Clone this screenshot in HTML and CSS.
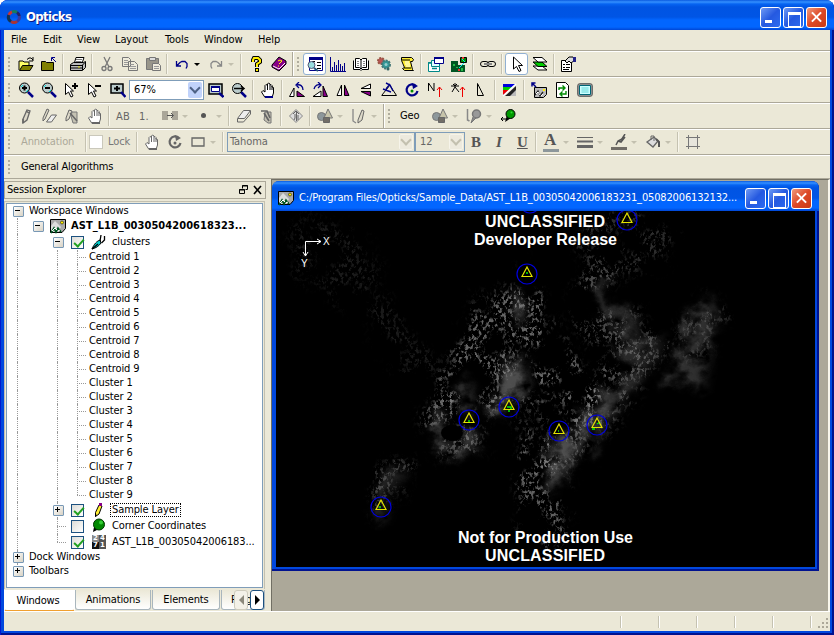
FILE: index.html
```html
<!DOCTYPE html>
<html lang="en">
<head>
<meta charset="utf-8">
<title>Opticks</title>
<link rel="stylesheet" href="styles.css">
</head>
<body>
<svg class="defs" width="0" height="0" aria-hidden="true">
<symbol id="open" viewBox="0 0 16 16"><path d="M1 14V5h4l1 1h5v3" fill="#ff6" stroke="#000"/><path d="M1.500 14.500L4.500 9.500H15L12 14.500z" fill="#808000" stroke="#000"/><path d="M9 3.500l2-1.500h2l2 2M15 1v4h-4" fill="none" stroke="#000"/></symbol>
<symbol id="closef" viewBox="0 0 16 16"><path d="M.500 14.500v-9h4l1 1h7v8z" fill="#808000" stroke="#000"/><path d="M15 6L11 2M10.500 5V1.500H14" fill="none" stroke="#008"/></symbol>
<symbol id="print" viewBox="0 0 16 16"><path d="M4.500 6.500L6 1.500h8l-2 6" fill="#fff" stroke="#000"/><path d="M6 3.500h6M5.500 5.500h6" stroke="#777"/><path d="M.500 8.500l3-2h10l2-1v6l-3 3h-12z" fill="#bbb" stroke="#000"/><path d="M1 9.500h11l3-3M12.500 9v5M1 12h11" stroke="#000" fill="none"/><path d="M8 11h2" stroke="#dd0"/></symbol>
<symbol id="cut" viewBox="0 0 16 16"><path d="M5 1l5 10M11 1L6 11" stroke="#777" stroke-width="1.300" fill="none"/><circle cx="5" cy="12.500" r="2" fill="none" stroke="#777" stroke-width="1.300"/><circle cx="11" cy="12.500" r="2" fill="none" stroke="#777" stroke-width="1.300"/></symbol>
<symbol id="copy" viewBox="0 0 16 16"><path d="M.500 1.500h6l2 2v7h-8zM6.500 5.500h6l3 3v6h-9z" fill="#eeebdc" stroke="#777"/><path d="M2 4.500h4M2 6.500h4M2 8.500h4M8 8.500h4M8 10.500h6M8 12.500h6" stroke="#999"/></symbol>
<symbol id="paste" viewBox="0 0 16 16"><path d="M1.500 2.500h12v11h-12z" fill="#98958a" stroke="#777"/><path d="M4.500 1.500h6v3h-6z" fill="#ddd" stroke="#777"/><path d="M7.500 7.500h6l2 2v5h-8z" fill="#eeebdc" stroke="#777"/><path d="M9 10.500h5M9 12.500h5" stroke="#999"/></symbol>
<symbol id="undo" viewBox="0 0 16 16"><path d="M2.500 5v5H7M3 9.500L6 6.500l2-1h3l2 2v3l-1 2" fill="none" stroke="currentColor" stroke-width="1.300"/></symbol>
<symbol id="redo" viewBox="0 0 16 16"><path d="M13.500 5v5H9M13 9.500L10 6.500l-2-1H5l-2 2v3l1 2" fill="none" stroke="currentColor" stroke-width="1.300"/></symbol>
<symbol id="help" viewBox="0 0 16 16"><path d="M5 6V4l1-2h4l2 2v2L9 8v3" fill="none" stroke="#000" stroke-width="4"/><path d="M7 12h4v4H7z"/><path d="M5 6V4l1-2h4l2 2v2L9 8v3M8 14h2" fill="none" stroke="#fe0" stroke-width="2"/></symbol>
<symbol id="book" viewBox="0 0 16 16"><path d="M1 9L8 1l7 4v3l-7 7-7-4z" fill="#808" stroke="#000"/><path d="M2 10l6 3 6-6" stroke="#fff" fill="none"/><path d="M7 5l2-1 2 1-2 2-1 1M7 10h1" stroke="#ff0" fill="none"/></symbol>
<symbol id="session" viewBox="0 0 16 16"><path d="M2.500 1.500h13v13h-13z" fill="#fff" stroke="#008"/><path d="M2 1h14v3H2z" fill="#008"/><path d="M10 6.500h4M10 9.500h4M10 12.500h4M5 5.500h3" stroke="#000"/><circle cx="4.500" cy="9" r="3.500" fill="#9dd" stroke="#557"/><path d="M7 12l4 3" stroke="#257" stroke-width="2"/></symbol>
<symbol id="hist" viewBox="0 0 16 16"><path d="M.500 1v14.500H16" stroke="#008" fill="none"/><path d="M2.500 15v-4M4.500 15V6M6.500 15V9M8.500 15V4M10.500 15V8M12.500 15v-5M14.500 15V7" stroke="#008"/></symbol>
<symbol id="pages" viewBox="0 0 16 16"><path d="M.500 4.500V13.500H7l1 1 1-1h6.500v-9" fill="#fff" stroke="#000"/><path d="M2.500 2.500h4l1.500 1.500 1.500-1.500h4v9h-4L8 13l-1.500-1.500h-4z" fill="#fff" stroke="#000"/><path d="M8 4v9" stroke="#000"/><path d="M4 5.500h2M4 7.500h2M4 9.500h2M10 5.500h2M10 7.500h2M10 9.500h2" stroke="#888"/></symbol>
<symbol id="gears" viewBox="0 0 16 16"><circle cx="5" cy="5" r="3" fill="#b55" stroke="#954" stroke-width="2" stroke-dasharray="2 1"/><circle cx="10" cy="8.500" r="4" fill="#399" stroke="#477" stroke-width="2" stroke-dasharray="2 1"/><circle cx="10" cy="8.500" r="1.500" fill="#9cc"/><circle cx="12" cy="13" r="1.500" fill="#366"/></symbol>
<symbol id="scroll" viewBox="0 0 16 16"><path d="M2.500 1.500h10l2 2-1 2h-2l2 8 1 1h-9l-2-2 2-1-3-7z" fill="#fe3" stroke="#000"/><path d="M6 6h4M6 8h5M7 10h4" stroke="#fff"/><path d="M3 4h8M5 12h7" stroke="#000"/></symbol>
<symbol id="wins" viewBox="0 0 16 16"><path d="M.500 6.500h11v9H.500z" fill="#fff" stroke="#088"/><path d="M0 7h11M4 12.500h5" stroke="#088" stroke-width="1.500"/><path d="M3.500 4.500h8v6h-8z" fill="#dff" stroke="#088"/><path d="M6.500 1.500h9v6h-9z" fill="#fff" stroke="#008"/><path d="M6 2h10" stroke="#008" stroke-width="2"/></symbol>
<symbol id="green" viewBox="0 0 16 16"><path d="M0 5h7v4h7v7H0z" fill="#052"/><path d="M9.500 1.500h6v5h-6z" fill="#080" stroke="#000"/><path d="M13 7l-5 5M11 3l3 3" stroke="#0ee"/><path d="M2 8h2v2H2zM10 12h2v3h-2zM5 11h2v1H5z" fill="#2b4"/><path d="M11 1h2v2h-2zM7 13h2v2H7z" fill="#e33"/></symbol>
<symbol id="link" viewBox="0 0 16 16"><g fill="none" stroke="#000"><rect x=".500" y="5.500" width="8" height="5" rx="2.500"/><rect x="7.500" y="5.500" width="8" height="5" rx="2.500"/></g><path d="M4 8h8" stroke="#444" stroke-width="2"/><path d="M4 8h8" stroke="#fff" stroke-width=".7"/></symbol>
<symbol id="cursor" viewBox="0 0 16 16"><path d="M4.500 1v12l3-2.500 2.500 5 2-1-2.500-5h4z" fill="#fff" stroke="#000"/></symbol>
<symbol id="layers" viewBox="0 0 16 16"><path d="M1 10h9l5 4H6z" fill="#fff" stroke="#000"/><path d="M1 6h9l5 4.500H6z" fill="#0c0" stroke="#000"/><path d="M1 1.500h9l5 4.500H6z" fill="#fff" stroke="#000"/></symbol>
<symbol id="props" viewBox="0 0 16 16"><path d="M.500 4.500h10v11H.500z" fill="#fff" stroke="#000"/><path d="M2 8.500h2M5 8.500h4M2 11.500h2M5 11.500h4M2 13.500h6" stroke="#000"/><path d="M4 5l4-4h4l2 3-4 3-2-2-2 2z" fill="#ddd" stroke="#000"/><path d="M12 1h3v5h-3z" fill="#228"/></symbol>
<symbol id="zin" viewBox="0 0 16 16"><path d="M10 10l5 5" stroke="#008" stroke-width="2.500"/><circle cx="6.500" cy="6" r="5" fill="#bcc" stroke="#000"/><path d="M4 6h5M6.500 3.500v5" stroke="#000" stroke-width="2"/><path d="M3 5l2-2M8 10l2-2" stroke="#0dd"/></symbol>
<symbol id="zout" viewBox="0 0 16 16"><path d="M10 10l5 5" stroke="#008" stroke-width="2.500"/><circle cx="6.500" cy="6" r="5" fill="#bcc" stroke="#000"/><path d="M4 6h5" stroke="#000" stroke-width="2"/><path d="M3 5l2-2M8 10l2-2" stroke="#0dd"/></symbol>
<symbol id="cplus" viewBox="0 0 16 16"><path d="M1.500 1.500v11l3-2.500 2.500 5 2-1-2.500-5h3z" fill="#fff" stroke="#000"/><path d="M8 4h6M11 1v6" stroke="#000" stroke-width="2"/></symbol>
<symbol id="cminus" viewBox="0 0 16 16"><path d="M1.500 1.500v11l3-2.500 2.500 5 2-1-2.500-5h3z" fill="#fff" stroke="#000"/><path d="M8 4h6" stroke="#000" stroke-width="2"/></symbol>
<symbol id="zrect" viewBox="0 0 16 16"><path d="M1 2h12v9H1z" fill="#bcc" stroke="#000" stroke-width="1.500"/><path d="M4 6.500h6M7 4v5" stroke="#000" stroke-width="2"/><path d="M11 10l4.500 5" stroke="#008" stroke-width="2.500"/></symbol>
<symbol id="zwin" viewBox="0 0 16 16"><path d="M1 2h13v10H1z" fill="#bcc" stroke="#000" stroke-width="1.500"/><path d="M3.500 4.500h8v5h-8z" fill="#fff" stroke="#008"/><path d="M3 5h9" stroke="#008" stroke-width="2"/><path d="M11 11l4.500 4" stroke="#008" stroke-width="2.500"/></symbol>
<symbol id="zfwd" viewBox="0 0 16 16"><path d="M10 10l5 5" stroke="#008" stroke-width="2.500"/><circle cx="6.500" cy="6.500" r="5" fill="#bcc" stroke="#000"/><path d="M3 6.500h9M10 4l3 2.500L10 9" stroke="#000" stroke-width="1.500" fill="none"/></symbol>
<symbol id="hand" viewBox="0 0 16 16"><path d="M5 15.500L1.500 10 3 8.500 5 10V3.500l1-1 1.500 1V2l1-1 1.500 1v1l1-.500 1 1V5l1.500.500V11L12 15.500z" fill="#fff" stroke="currentColor"/><path d="M7.500 3v5M10 3v5M12 4v4" stroke="currentColor"/><path d="M5 15h8" stroke="var(--cuff)" stroke-width="2"/></symbol>
<symbol id="rotl" viewBox="0 0 16 16"><path d="M.500 14.500L5 6v8.500z" fill="#fff" stroke="#000"/><path d="M8 14.500V9l7.500 5.500z" fill="#808" stroke="#000"/><path d="M14 8c0-4-3-6-6-5M10 0L7 3l3 3" stroke="#008" fill="none" stroke-width="1.300"/></symbol>
<symbol id="rotr" viewBox="0 0 16 16"><path d="M15.500 14.500L11 4v10.500z" fill="#808" stroke="#000"/><path d="M9 14.500V9L1 14.500z" fill="#fff" stroke="#000"/><path d="M2 7c1-4 4-5 7-4M6 0l3 3-3 3" stroke="#008" fill="none" stroke-width="1.300"/></symbol>
<symbol id="fliph" viewBox="0 0 16 16"><path d="M6.500 3v10.500H2z" fill="#fff" stroke="#000"/><path d="M9.500 3v10.500H14z" fill="#808" stroke="#000"/></symbol>
<symbol id="flipv" viewBox="0 0 16 16"><path d="M12.500 6.500H3l9.500-4.500z" fill="#fff" stroke="#000"/><path d="M12.500 9.500H3l9.500 4.500z" fill="#808" stroke="#000"/></symbol>
<symbol id="rotfree" viewBox="0 0 16 16"><path d="M.500 13.500h15L8 2M1 13L9 3" stroke="#000" fill="none"/><path d="M5 1l4 2 3 6M2 7l8 3M9 2l-4 5" stroke="#008" stroke-width="1.400" fill="none"/></symbol>
<symbol id="rotate" viewBox="0 0 16 16"><path d="M12 4A5.500 5.500 0 1 0 13.500 9" fill="none" stroke="currentColor" stroke-width="2.200"/><path d="M8 1l6 3-5 3z" fill="currentColor"/><circle cx="8" cy="9" r="1.500" fill="var(--hub)"/></symbol>
<symbol id="north" viewBox="0 0 16 16"><path d="M1.500 9V1L7 9V1" stroke="#000" fill="none"/><path d="M12.500 15V5M10 8l2.500-3L15 8" stroke="#e00" fill="none"/></symbol>
<symbol id="north2" viewBox="0 0 16 16"><path d="M1 4h8M5 1v4L2 10M5 5l4 5M3 2l2 2 2-2" stroke="#000" fill="none"/><path d="M12.500 15V5M10 8l2.500-3L15 8" stroke="#e00" fill="none"/></symbol>
<symbol id="tri" viewBox="0 0 16 16"><path d="M4.500 1.500v12h6z" stroke="#000" fill="none"/></symbol>
<symbol id="diag" viewBox="0 0 16 16"><path d="M1 2h13L1 13z" fill="#00d"/><path d="M1 5h10L6 9H1z" fill="#0c0"/><path d="M1 8h6l-6 5z" fill="#e00"/><path d="M14 4v10H3z" fill="#222"/><path d="M14 8v6H8z" fill="#bbb"/><path d="M14 2L1 14" stroke="#fff" stroke-width="1.500"/></symbol>
<symbol id="scene" viewBox="0 0 16 16"><path d="M.500 1.500h15v9L12 14.500H.500z" fill="#aaa" stroke="#000"/><path d="M1 8l4-5 4 4 2 2-3 5H1z" fill="#ddd"/><path d="M1 15l3-5 2 4 2-4 3 4" stroke="#052" stroke-width="1.700" fill="none"/><path d="M2 13l3-3 2 2M8 13l2-1" stroke="#fff" fill="none"/><circle cx="12" cy="4.500" r="1.500" fill="#fe0" stroke="#000" stroke-width=".5"/></symbol>
<symbol id="addscene" viewBox="0 0 16 16"><path d="M3.500 5.500h12v7l-3 3h-9z" fill="#bbb" stroke="#000"/><path d="M4 13l3-4 2 5 3-4" stroke="#222" stroke-width="1.300" fill="none"/><path d="M5 12l2-2 2 3M10 14l2-2" stroke="#fff" fill="none"/><path d="M1 1l4 4M1 4.500V1h3.500" stroke="#008" stroke-width="1.500" fill="none"/><path d="M12 7h2v2h-2z" fill="#fe0"/></symbol>
<symbol id="refresh" viewBox="0 0 16 16"><path d="M2.500.500h9l3 3v12h-12z" fill="#fff" stroke="#000"/><path d="M5 8V6h5M8.500 3.500L11 6 8.500 8.500M12 9v3H7M8.500 9.500L6 12l2.500 2.500" stroke="#080" stroke-width="1.400" fill="none"/></symbol>
<symbol id="screen" viewBox="0 0 16 16"><rect x=".7" y="1.700" width="14.600" height="12.600" rx="2" fill="#999" stroke="#555"/><path d="M2.500 3.500h11v9h-11z" fill="#cff" stroke="#067"/><path d="M4 6h8M4 8h8M4 10h8M6 5v6M8 5v6M10 5v6" stroke="#5cc" stroke-width=".5"/></symbol>
<symbol id="pencil" viewBox="0 0 16 16"><path d="M5 11L9 2l3 1-3 9-4 3z" fill="#ddd9c9" stroke="#666" stroke-width="1.300"/><path d="M8 3l3 2M5 11v4" stroke="#666" stroke-width="1.500"/></symbol>
<symbol id="penerase" viewBox="0 0 16 16"><path d="M2 10L6 1l2 1-4 9-2 2z" fill="#ddd9c9" stroke="#666"/><path d="M5.500 14l5-7h5l-5 7z" fill="#eee" stroke="#666"/></symbol>
<symbol id="pencopy" viewBox="0 0 16 16"><path d="M2 10L5 2l3 1-3 8-3 2z" fill="#ddd9c9" stroke="#666"/><path d="M8 4h5v11h-4L7 8z" fill="#c5c2b3" stroke="#777"/><path d="M6 5l7 8" stroke="#666" stroke-width="1.500"/></symbol>
<symbol id="numbers" viewBox="0 0 16 16"><path d="M0 3h6v9H0zM10 3h6v9h-6z" fill="#aaa699"/><path d="M5 7.500h6M9 5l2.500 2.500L9 10" stroke="#555" fill="none"/></symbol>
<symbol id="dot" viewBox="0 0 16 16"><circle cx="7.500" cy="7.500" r="2.500" fill="#555"/></symbol>
<symbol id="eraser" viewBox="0 0 16 16"><path d="M1.500 10.500l6-8h7l-6 8z" fill="#eee" stroke="#666"/><path d="M1.500 11v3h6l7-8V3" fill="none" stroke="#666"/></symbol>
<symbol id="penbook" viewBox="0 0 16 16"><path d="M6 4h6v11H9L5 12z" fill="#c5c2b3" stroke="#777"/><path d="M2 3h6l3 7M5 5l5 8" stroke="#666" stroke-width="1.700" fill="none"/></symbol>
<symbol id="road" viewBox="0 0 16 16"><path d="M8 1.500L14.500 8 8 14.500 1.500 8z" fill="#ddd" stroke="#888"/><path d="M6 12l1-2V6M8.500 4v9M10 12V7M5 6l3-3 3 3" stroke="#666" fill="none"/></symbol>
<symbol id="shapes" viewBox="0 0 16 16"><circle cx="4.500" cy="8.500" r="4" fill="#8d979b" stroke="#777"/><path d="M11 1l4.500 9H7z" fill="#c7c4aa" stroke="#777"/><path d="M6.500 9.500h6v5h-6z" fill="#716d67" stroke="#666"/></symbol>
<symbol id="pens" viewBox="0 0 16 16"><path d="M2 1v12l3 2M2 1v9" stroke="#888" stroke-width="1.300" fill="none"/><path d="M7 12l4-10 2 1-2 9-4 3z" fill="#ddd9c9" stroke="#666"/></symbol>
<symbol id="pin" viewBox="0 0 16 16"><path d="M1.500 1v11l2 1" stroke="#888" stroke-width="1.500" fill="none"/><circle cx="10.500" cy="6" r="4" fill="#999" stroke="#777" stroke-width="1.500"/><path d="M7 9l-2 6 5-5" fill="#888" stroke="#777"/></symbol>
<symbol id="gpin" viewBox="0 0 16 16"><path d="M7 7l-2 7 6-4z"/><circle cx="10.500" cy="6" r="4.500" fill="#090" stroke="#000"/><path d="M1 11h6M3 9l-2 2 2 2" stroke="#000" fill="none"/><circle cx="11.500" cy="4.500" r="1" fill="#3d3"/></symbol>
<symbol id="balloon" viewBox="0 0 16 16"><path d="M3 9l-1 5 6-3z"/><circle cx="8" cy="6.500" r="5.500" fill="#080" stroke="#030"/><circle cx="10" cy="4.500" r="2" fill="#3c3"/></symbol>
<symbol id="rect" viewBox="0 0 16 16"><path d="M2 4h12v8H2z" fill="none" stroke="#666" stroke-width="1.300"/></symbol>
<symbol id="lines" viewBox="0 0 16 16"><path d="M0 3.500h16" stroke="#666"/><path d="M0 7.500h16" stroke="#666" stroke-width="2"/><path d="M0 12.500h16" stroke="#666" stroke-width="3"/></symbol>
<symbol id="pen" viewBox="0 0 16 16"><path d="M0 13h16v3H0z" fill="#716d67"/><path d="M5 11l2-4 4-2 3-5M7 7l3 1 4-5" fill="#999" stroke="#555" stroke-width="1.500"/></symbol>
<symbol id="fill" viewBox="0 0 16 16"><path d="M2 8l7-5 4 4-5 6z" fill="#ddd" stroke="#666" stroke-width="1.300"/><path d="M6 6V2h3v5" fill="none" stroke="#666"/><path d="M11 5l3 3v5" stroke="#555" stroke-width="2" fill="none"/></symbol>
<symbol id="crop" viewBox="0 0 16 16"><path d="M4 4h8v8H4z" fill="#e7e5dc"/><path d="M3.500 1v14M12.500 1v14M1 3.500h14M1 12.500h14" stroke="#777" fill="none"/></symbol>
<symbol id="brush" viewBox="0 0 16 16"><path d="M1 15c2-5 5-8 8-9l1 3c-2 3-5 5-9 6z" fill="#0cc" stroke="#000"/><path d="M9 7l1-6M10.500 9l3-3V2M1 15l6-5" stroke="#000" fill="none" stroke-width="1.300"/></symbol>
<symbol id="ypencil" viewBox="0 0 16 16"><path d="M4.500 14.500v-4L8 3l3 1-3 8z" fill="#fe3" stroke="#000"/><path d="M8 1h3v3H8z" fill="#808"/><path d="M4 12v3l2-2z"/></symbol>
<symbol id="marker" viewBox="-12 -12 24 24"><circle r="10" fill="none" stroke="#00d" stroke-width="1.200"/><path d="M0-7L5 2.500H-5z" fill="none" stroke="#e2e200" stroke-width="1.200"/></symbol>
</svg>
<div class="frame">
  <header class="titlebar">
    <svg class="logo" viewBox="0 0 16 16"><g fill="none" stroke-width="3"><path d="M2.800 6A5.500 5.500 0 0 1 6 2.800" stroke="#c33"/><path d="M6 2.800A5.500 5.500 0 0 1 11 3.500" stroke="#187b5c"/><path d="M11 3.500A5.500 5.500 0 0 1 13.400 7" stroke="#226"/><path d="M13.400 7A5.500 5.500 0 0 1 11 12.500" stroke="#3c3a9c"/><path d="M11 12.500A5.500 5.500 0 0 1 5 12.600" stroke="#a33"/><path d="M5 12.600A5.500 5.500 0 0 1 2.800 6" stroke="#135"/></g></svg>
    <h1>Opticks</h1>
    <div class="caps"><b class="cap min"></b><b class="cap max"></b><b class="cap close"></b></div>
  </header>
  <div class="body">
    <nav class="menu"><span>File</span><span>Edit</span><span>View</span><span>Layout</span><span>Tools</span><span>Window</span><span>Help</span></nav>
    <div class="bar">
      <i class="grip"></i>
      <i class="b"><svg><use href="#open"/></svg></i><i class="b"><svg><use href="#closef"/></svg></i><i class="sep"></i>
      <i class="b"><svg><use href="#print"/></svg></i><i class="sep"></i>
      <i class="b"><svg><use href="#cut"/></svg></i><i class="b"><svg><use href="#copy"/></svg></i><i class="b"><svg><use href="#paste"/></svg></i><i class="sep"></i>
      <i class="b drop navy"><svg><use href="#undo"/></svg></i><i class="b drop off"><svg><use href="#redo"/></svg></i><i class="sep"></i>
      <i class="b"><svg><use href="#help"/></svg></i><i class="b"><svg><use href="#book"/></svg></i><i class="edge"></i>
      <i class="grip"></i>
      <i class="b on"><svg><use href="#session"/></svg></i><i class="b"><svg><use href="#hist"/></svg></i><i class="b"><svg><use href="#pages"/></svg></i><i class="b"><svg><use href="#gears"/></svg></i><i class="b"><svg><use href="#scroll"/></svg></i><i class="sep"></i>
      <i class="b"><svg><use href="#wins"/></svg></i><i class="b"><svg><use href="#green"/></svg></i><i class="sep"></i>
      <i class="b"><svg><use href="#link"/></svg></i><i class="sep"></i>
      <i class="b on"><svg><use href="#cursor"/></svg></i><i class="b"><svg><use href="#layers"/></svg></i><i class="sep"></i>
      <i class="b"><svg><use href="#props"/></svg></i>
    </div>
    <div class="bar">
      <i class="grip"></i>
      <i class="b"><svg><use href="#zin"/></svg></i><i class="b"><svg><use href="#zout"/></svg></i><i class="b"><svg><use href="#cplus"/></svg></i><i class="b"><svg><use href="#cminus"/></svg></i><i class="b"><svg><use href="#zrect"/></svg></i>
      <div class="combo zoom"><span>67%</span><i class="arr"></i></div>
      <i class="b"><svg><use href="#zwin"/></svg></i><i class="b"><svg><use href="#zfwd"/></svg></i><i class="sep"></i>
      <i class="b"><svg><use href="#hand"/></svg></i><i class="sep"></i>
      <i class="b"><svg><use href="#rotl"/></svg></i><i class="b"><svg><use href="#rotr"/></svg></i><i class="b"><svg><use href="#fliph"/></svg></i><i class="b"><svg><use href="#flipv"/></svg></i><i class="b"><svg><use href="#rotfree"/></svg></i><i class="b navy"><svg><use href="#rotate"/></svg></i><i class="b"><svg><use href="#north"/></svg></i><i class="b"><svg><use href="#north2"/></svg></i><i class="b"><svg><use href="#tri"/></svg></i><i class="sep"></i>
      <i class="b"><svg><use href="#diag"/></svg></i><i class="sep"></i>
      <i class="b"><svg><use href="#addscene"/></svg></i><i class="b"><svg><use href="#refresh"/></svg></i><i class="b"><svg><use href="#screen"/></svg></i>
    </div>
    <div class="bar">
      <i class="grip"></i>
      <i class="b"><svg><use href="#pencil"/></svg></i><i class="b"><svg><use href="#penerase"/></svg></i><i class="b"><svg><use href="#pencopy"/></svg></i><i class="b gray"><svg><use href="#hand"/></svg></i><i class="sep"></i>
      <span class="b gray glyph">AB</span><span class="b gray glyph">1.</span><i class="b drop off"><svg><use href="#numbers"/></svg></i><i class="b drop off"><svg><use href="#dot"/></svg></i><i class="sep"></i>
      <i class="b"><svg><use href="#eraser"/></svg></i><i class="b"><svg><use href="#penbook"/></svg></i><i class="sep"></i>
      <i class="b"><svg><use href="#road"/></svg></i><i class="sep"></i>
      <i class="b drop off"><svg><use href="#shapes"/></svg></i><i class="b drop off"><svg><use href="#pens"/></svg></i><i class="edge"></i>
      <i class="grip"></i>
      <span class="geo">Geo</span><i class="b drop off"><svg><use href="#shapes"/></svg></i><i class="b drop off"><svg><use href="#pin"/></svg></i><i class="b"><svg><use href="#gpin"/></svg></i>
    </div>
    <div class="bar">
      <i class="grip"></i>
      <span class="annot">Annotation</span><i class="sep"></i>
      <span class="lock"><i></i>Lock</span><i class="sep"></i>
      <i class="b gray"><svg><use href="#hand"/></svg></i><i class="b gray"><svg><use href="#rotate"/></svg></i><i class="b drop off"><svg><use href="#rect"/></svg></i><i class="sep"></i>
      <div class="combo font dis"><span>Tahoma</span><i class="arr"></i></div><div class="combo size dis"><span>12</span><i class="arr"></i></div>
      <span class="b gray serif">B</span><span class="b gray serif ital">I</span><span class="b gray serif und">U</span><i class="sep"></i>
      <span class="b drop off serif color">A</span><i class="b drop off"><svg><use href="#lines"/></svg></i><i class="b drop off"><svg><use href="#pen"/></svg></i><i class="b drop off"><svg><use href="#fill"/></svg></i><i class="sep"></i>
      <i class="b"><svg><use href="#crop"/></svg></i>
    </div>
    <div class="bar last"><i class="grip"></i><span class="algo">General Algorithms</span></div>
    <main class="work">
      <aside class="dock">
        <div class="dockhead"><span>Session Explorer</span><svg viewBox="0 0 24 10"><path d="M3.500 3.500v-3h5v4h-2M.500 4.500h5v4h-5zM3 1h6M0 5h6" fill="none" stroke="#000"/><path d="M15 1l7 8M22 1l-7 8" stroke="#000" stroke-width="1.600"/></svg></div>
        <div class="panel"><div class="tree">
          <div class="row"><i class="g x first"></i><span>Workspace Windows</span></div>
          <div class="row tall"><i class="g v"></i><i class="g x"></i><svg><use href="#scene"/></svg><strong>AST_L1B_0030504200618323...</strong></div>
          <div class="row tall"><i class="g v"></i><i class="g"></i><i class="g x"></i><i class="chk yes"></i><svg><use href="#brush"/></svg><span>clusters</span></div>
          <div class="row"><i class="g v"></i><i class="g"></i><i class="g v"></i><i class="g v t"></i><span>Centroid 1</span></div>
          <div class="row"><i class="g v"></i><i class="g"></i><i class="g v"></i><i class="g v t"></i><span>Centroid 2</span></div>
          <div class="row"><i class="g v"></i><i class="g"></i><i class="g v"></i><i class="g v t"></i><span>Centroid 3</span></div>
          <div class="row"><i class="g v"></i><i class="g"></i><i class="g v"></i><i class="g v t"></i><span>Centroid 4</span></div>
          <div class="row"><i class="g v"></i><i class="g"></i><i class="g v"></i><i class="g v t"></i><span>Centroid 5</span></div>
          <div class="row"><i class="g v"></i><i class="g"></i><i class="g v"></i><i class="g v t"></i><span>Centroid 6</span></div>
          <div class="row"><i class="g v"></i><i class="g"></i><i class="g v"></i><i class="g v t"></i><span>Centroid 7</span></div>
          <div class="row"><i class="g v"></i><i class="g"></i><i class="g v"></i><i class="g v t"></i><span>Centroid 8</span></div>
          <div class="row"><i class="g v"></i><i class="g"></i><i class="g v"></i><i class="g v t"></i><span>Centroid 9</span></div>
          <div class="row"><i class="g v"></i><i class="g"></i><i class="g v"></i><i class="g v t"></i><span>Cluster 1</span></div>
          <div class="row"><i class="g v"></i><i class="g"></i><i class="g v"></i><i class="g v t"></i><span>Cluster 2</span></div>
          <div class="row"><i class="g v"></i><i class="g"></i><i class="g v"></i><i class="g v t"></i><span>Cluster 3</span></div>
          <div class="row"><i class="g v"></i><i class="g"></i><i class="g v"></i><i class="g v t"></i><span>Cluster 4</span></div>
          <div class="row"><i class="g v"></i><i class="g"></i><i class="g v"></i><i class="g v t"></i><span>Cluster 5</span></div>
          <div class="row"><i class="g v"></i><i class="g"></i><i class="g v"></i><i class="g v t"></i><span>Cluster 6</span></div>
          <div class="row"><i class="g v"></i><i class="g"></i><i class="g v"></i><i class="g v t"></i><span>Cluster 7</span></div>
          <div class="row"><i class="g v"></i><i class="g"></i><i class="g v"></i><i class="g v t"></i><span>Cluster 8</span></div>
          <div class="row"><i class="g v"></i><i class="g"></i><i class="g v"></i><i class="g h t"></i><span>Cluster 9</span></div>
          <div class="row tall"><i class="g v"></i><i class="g"></i><i class="g v x plus"></i><i class="chk yes"></i><svg><use href="#ypencil"/></svg><span class="focus">Sample Layer</span></div>
          <div class="row tall"><i class="g v"></i><i class="g"></i><i class="g v t"></i><i class="chk"></i><svg><use href="#balloon"/></svg><span>Corner Coordinates</span></div>
          <div class="row tall"><i class="g v"></i><i class="g"></i><i class="g h t"></i><i class="chk yes"></i><b class="digits"><u>2</u><u>4</u><u>7</u><u>1</u></b><span>AST_L1B_00305042006183...</span></div>
          <div class="row"><i class="g v x plus"></i><span>Dock Windows</span></div>
          <div class="row"><i class="g h x plus"></i><span>Toolbars</span></div>
        </div></div>
        <div class="tabs"><span class="tab cur">Windows</span><span class="tab">Animations</span><span class="tab t2">Elements</span><span class="tab cut">Plug</span><i class="scr"></i><i class="scr r"></i></div>
      </aside>
      <section class="mdi">
        <div class="child">
          <header class="ctitle"><svg><use href="#scene"/></svg><h2>C:/Program Files/Opticks/Sample_Data/AST_L1B_00305042006183231_05082006132132...</h2><div class="caps"><b class="cap min"></b><b class="cap max"></b><b class="cap close"></b></div></header>
          <div class="view">
            <svg class="terrain" viewBox="276 211 539 356">
              <defs>
                <filter id="haze" x="-10%" y="-10%" width="120%" height="120%" color-interpolation-filters="sRGB"><feGaussianBlur stdDeviation="4" result="a"/><feTurbulence type="fractalNoise" baseFrequency=".05 .06" numOctaves="5" seed="4" result="t"/><feDisplacementMap in="a" in2="t" scale="22" xChannelSelector="R" yChannelSelector="G" result="d"/><feColorMatrix in="t" values="0 0 0 0 1 0 0 0 0 1 0 0 0 0 1 2.500 0 0 0 -.55" result="n"/><feComposite in="d" in2="n" operator="in"/></filter>
                <filter id="grain" x="-10%" y="-10%" width="120%" height="120%" color-interpolation-filters="sRGB"><feGaussianBlur stdDeviation="6" result="a"/><feTurbulence type="fractalNoise" baseFrequency=".035" numOctaves="6" seed="23" result="big"/><feDisplacementMap in="a" in2="big" scale="30" xChannelSelector="R" yChannelSelector="G" result="d"/><feColorMatrix in="big" values="0 0 0 0 1 0 0 0 0 1 0 0 0 0 1 0 6 0 0 -2.500" result="m"/><feTurbulence type="fractalNoise" baseFrequency=".32 .22" numOctaves="4" seed="11"/><feColorMatrix values="0 0 0 0 1 0 0 0 0 1 0 0 0 0 1 6 0 0 0 -3" result="n"/><feComposite in="d" in2="m" operator="in" result="dm"/><feComposite in="dm" in2="n" operator="in"/></filter>
              </defs>
              <g filter="url(#haze)" fill="#686868">
                <path d="M510 300l10-8 6 18-4 12-14-4z" fill-opacity=".7"/>
                <path d="M508 358l18 4 4 20-8 20-22 12-14-2 14-16z" fill-opacity=".75"/>
                <path d="M617 271l-14 18 8 18 26 6 4 28 24-2-14 30-20 26-20 16-34 34-16 42-12 8-2-30 0-20 28-22 24-28 40-28-22-20-10-30-14-12 4-28z" fill-opacity=".42"/>
                <path d="M545 455l24-16 24-24 14-14 12 4-10 20-28 26-18 24-14 4z" fill-opacity=".6"/>
                <path d="M708 298l12 12-8 34-8 48-24-12-24 8 20-26 6-40z" fill-opacity=".45"/>
                <path d="M430 410l14 0 2 20 8 16 8-14 16 0 2 16-16 12-26-4zM460 380l12 0 4 30-12 4z" fill-opacity=".55"/>
                <path d="M404 462l4 10-20 26-12 4 6-20zM374 504h14v18h-14zM584 446h18v12h-14z" fill-opacity=".35"/>
              </g>
              <g filter="url(#grain)" fill="#a0a0a0">
                <path d="M520 268l12 14 14 28 16 28 14 26 34 18-14 40-44 10-24-24-20-10-20 20-36 4-14-20 16-50 22-44 20-16z" fill-opacity=".62"/>
                <path d="M590 216l50-6 34 24-8 30-50 20-36-20z" fill-opacity=".28"/>
                <path d="M574 280l44-16-12 36 36 16 10 20 20-4-34 68-50 50-36 34-30-34 60-50 20-40-30-50z" fill-opacity=".45"/>
                <path d="M706 294l16 14-14 50-30 4 0-40z" fill-opacity=".4"/>
                <path d="M426 400l26 0 16-26 20 24-6 56-40 6-20-30z" fill-opacity=".5"/>
                <path d="M398 456l14 4-22 44-18 20-4-30z" fill-opacity=".4"/>
                <path d="M518 424l44 20 4 40-4 66-32 0-16-60z" fill-opacity=".6"/>
                <path d="M290 220l70 10 20 60 60 80-20 30-60-80-60-40z" fill-opacity=".16"/>
              </g>
              <path d="M750 300l-40 20-30 46-50 70-30 60h160z" fill="#000" fill-opacity="0"/>
              <ellipse cx="452" cy="433" rx="11" ry="8"/>
              <path d="M305.500 256V241.500H321M317 239l4 2.500-4 2.500M303 252l2.500 4 2.500-4" fill="none" stroke="#fff"/>
              <text class="axis" x="323" y="245">X</text><text class="axis" x="301" y="267">Y</text>
              <g class="wm"><text x="545" y="227" textLength="120">UNCLASSIFIED</text><text x="545.500" y="245" textLength="143">Developer Release</text><text x="545.500" y="543" textLength="175">Not for Production Use</text><text x="545" y="561" textLength="120">UNCLASSIFIED</text></g>
              <path d="M526 273h2M507 407h4v2M508 411h2M597 424l3-2M592 429h3M468 421h2M379 507h2M558 431h1" stroke="#0e0" stroke-width="1.500" fill="none"/>
              <use href="#marker" x="515" y="262" width="24" height="24"/><use href="#marker" x="518" y="191" width="24" height="24"/><use href="#marker" x="615" y="208" width="24" height="24"/><use href="#marker" x="457" y="408" width="24" height="24"/><use href="#marker" x="497" y="395" width="24" height="24"/><use href="#marker" x="547" y="419" width="24" height="24"/><use href="#marker" x="585" y="413" width="24" height="24"/><use href="#marker" x="369" y="495" width="24" height="24"/>
            </svg>
          </div>
        </div>
      </section>
    </main>
    <footer class="status"><i></i><i></i><i></i><i></i><i></i><i></i><svg viewBox="0 0 12 12"><path d="M9 1h2M9 5h2M5 5h2M9 9h2M5 9h2M1 9h2" stroke="#aca899" stroke-width="2"/></svg></footer>
  </div>
</div>
</body>
</html>
```
FILE: styles.css
```css
* { box-sizing: border-box; }
body { margin: 0; background: #fff; font: 11px/14px "DejaVu Sans", sans-serif; font-stretch: condensed; color: #000; overflow: hidden; letter-spacing: -.1px; }
i, u { font-style: normal; text-decoration: none; }
h1, h2 { margin: 0; color: #fff; }
.defs { position: absolute; }
svg { width: 16px; height: 16px; display: block; flex: none; }

.frame { width: 834px; height: 635px; padding: 0 4px 4px; border-radius: 8px 8px 0 0; background: #0148de; box-shadow: inset 1px 0 #0019cf, inset -2px -2px #00128f; }
.titlebar { height: 30px; margin: 0 -4px; padding: 4px 7px 0 6px; display: flex; align-items: center; border-radius: 8px 8px 0 0; background: linear-gradient(#0a5ae0 0, #3490ff 2px, #0664f2 4px, #0054e3 7px, #0055e5 17px, #0266ff 20px, #0266ff 27px, #0046d5 30px); }
.logo { margin-right: 4px; }
h1 { flex: 1; font: bold 13px/16px "DejaVu Sans", sans-serif; font-stretch: condensed; letter-spacing: -.6px; text-shadow: 1px 1px #0a1883; }
.caps { display: flex; gap: 2px; }
.cap { position: relative; width: 21px; height: 21px; border: 1px solid #fff; border-radius: 3px; background: linear-gradient(135deg, #6f9af4, #2559e0 50%, #2d6cf0); }
.cap.close { background: linear-gradient(135deg, #f09a7c, #dd4826 50%, #c93a16); }
.min::after { content: ""; position: absolute; left: 4px; top: 12px; width: 7px; height: 3px; background: #fff; }
.max::after { content: ""; position: absolute; left: 4px; top: 4px; width: 11px; height: 11px; border: 1px solid #fff; border-top-width: 3px; }
.close::before, .close::after { content: ""; position: absolute; left: 3px; top: 8px; width: 13px; height: 2px; background: #fff; transform: rotate(45deg); }
.close::after { transform: rotate(-45deg); }

.body { height: 601px; background: #ebe8d7; display: flex; flex-direction: column; }
.menu { height: 21px; flex: none; border-bottom: 1px solid #aca899; padding: 0 7px; display: grid; grid-template-columns: 32px 34px 38px 50px 39px 54px auto; line-height: 20px; }
.bar { height: 26px; flex: none; border-top: 1px solid #fff; border-bottom: 1px solid #aca899; display: flex; align-items: center; }
.bar.last { height: 24px; }
.grip { width: 10px; height: 16px; flex: none; background: radial-gradient(circle at 1px 1px, #b0ad9e 1px, transparent 1.300px) 4px 1px / 10px 4px; }
.edge { width: 3px; height: 24px; flex: none; border-right: 1px solid #aca899; box-shadow: 1px 0 #fff; }
.b { width: 23px; height: 22px; flex: none; display: flex; align-items: center; padding-left: 4px; color: #000; --hub: #080; --cuff: #008; }
.sep { width: 2px; margin: 0 2px; height: 20px; flex: none; border-left: 1px solid #c5c2b1; border-right: 1px solid #f8f6ec; }
.on { background: #fff; border: 1px solid #91b0d2; border-radius: 3px; padding-left: 3px; }
.drop { width: 34px; }
.drop::after { content: ""; margin-left: 4px; border: 3px solid transparent; border-top-color: #000; border-bottom: 0; }
.off::after { border-top-color: #c3c0af; }
.navy { color: #008; }
.gray, .off { color: #666; --hub: #666; --cuff: #666; }
.off { color: #888; }
.glyph { letter-spacing: .2px; padding-top: 2px; }
.serif { font: bold 15px/20px "Liberation Serif", serif; color: #555; padding-left: 7px; }
.ital { font-style: italic; padding-left: 9px; }
.und { text-decoration: underline; }
.color { position: relative; font-size: 17px; padding: 0 0 4px 5px; }
.color::before { content: ""; position: absolute; left: 4px; bottom: 1px; width: 16px; height: 3px; background: #8d979b; }
.color::after { margin-left: 7px; margin-top: 4px; }
.combo { height: 20px; flex: none; border: 1px solid #7f9db9; background: #fff; display: flex; align-items: center; justify-content: space-between; padding: 0 1px 0 4px; }
.zoom { width: 75px; }
.font { width: 188px; padding-left: 2px; margin-left: 1px; }
.size { width: 50px; margin-right: -1px; }
.dis { background: #ebe8d7; color: #666; }
.arr { width: 14px; height: 16px; border-radius: 2px; background: #c1d3fb; display: flex; justify-content: center; align-items: center; }
.arr::after { content: ""; width: 6px; height: 6px; border: solid #4d6185; border-width: 0 2px 2px 0; transform: translateY(-2px) rotate(45deg); }
.dis .arr { background: #edeade; border: 1px solid #f6f4ea; }
.dis .arr::after { border-color: #c3c0af; }
.geo { width: 34px; padding-left: 6px; }
.annot { width: 69px; padding-left: 7px; color: #aca899; }
.lock { display: flex; align-items: center; gap: 5px; width: 45px; color: #777; }
.lock i { width: 14px; height: 14px; border: 1px solid #cac8bb; background: #fff; }
.algo { padding-left: 7px; letter-spacing: -.2px; }

.work { flex: 1; min-height: 0; display: flex; }
.dock { width: 267px; flex: none; padding-top: 2px; }
.dockhead { width: 262px; height: 18px; border: 1px solid #aca899; padding: 0 2px; display: flex; justify-content: space-between; align-items: center; letter-spacing: -.2px; }
.dockhead svg { width: 24px; height: 10px; }
.panel { width: 261px; height: 388px; margin-top: 2px; padding: 1px; border: 1px solid #c3c0b0; border-bottom: 0; }
.tree { height: 385px; width: 257px; border: 1px solid #7f9db9; background: #fff; }
.row { height: 14px; display: flex; align-items: center; white-space: nowrap; }
.row.tall { height: 16px; }
.row > svg { margin: 0 6px 0 3px; }
.row span { padding: 0 2px; }
.row strong { letter-spacing: .06px; }
.row > svg + strong { margin-left: -1px; }
.chk + svg { margin-left: 7px; margin-right: 3px; }
.g { position: relative; width: 20px; flex: none; align-self: stretch; display: flex; align-items: center; }
.v::before, .h::before { content: ""; position: absolute; left: 10px; top: 0; bottom: 0; border-left: 1px dotted #999; }
.h::before { bottom: 50%; }
.t::after { content: ""; position: absolute; left: 10px; width: 9px; top: 50%; border-top: 1px dotted #999; }
.x::after { content: ""; position: relative; margin-left: 6px; width: 9px; height: 9px; border: 1px solid #7898b5; border-radius: 1px; background: linear-gradient(#000, #000) 1px 3px / 5px 1px no-repeat, linear-gradient(135deg, #fff, #d8d2c4); }
.x.plus::after { background: linear-gradient(#000, #000) 1px 3px / 5px 1px no-repeat, linear-gradient(#000, #000) 3px 1px / 1px 5px no-repeat, linear-gradient(135deg, #fff, #d8d2c4); }
.chk { width: 13px; height: 13px; margin-left: 4px; border: 1px solid #1c5180; background: linear-gradient(135deg, #dcdcd7, #fff); position: relative; }
.yes::after { content: ""; position: absolute; left: 4px; top: 0; width: 4px; height: 8px; border: solid #21a121; border-width: 0 2px 2px 0; transform: rotate(42deg); }
.focus { outline: 1px dotted #000; outline-offset: -1px; }
.digits { width: 14px; height: 14px; margin: 0 4px 0 8px; display: grid; grid-template-columns: 7px 7px; font: bold 7px/7px "DejaVu Sans", sans-serif; color: #fff; text-align: center; }
.digits u { background: #555; }
.digits u:nth-child(3) { background: #111; }
.digits u:nth-child(1) { background: #888; }
.tabs { width: 262px; height: 23px; margin-top: 1px; display: flex; overflow: hidden; line-height: 20px; text-align: center; }
.tab { flex: none; width: 76px; height: 20px; margin-right: 1px; border: 1px solid #a9b6bd; border-top: 0; border-radius: 0 0 3px 3px; background: linear-gradient(#ebe8d7, #fff); }
.tab.cur { width: 71px; height: 22px; margin: 0; border-color: #fff; border-bottom: 2px solid #f0a030; background: #fff; line-height: 22px; letter-spacing: -.2px; padding-right: 3px; }
.tab.t2 { width: 68px; }
.tab.cut { width: 44px; text-align: left; padding-left: 9px; }
.scr { flex: none; width: 14px; height: 20px; margin-left: -32px; z-index: 1; border: 1px solid #cfccbd; border-radius: 3px; background: #f3f1e8; display: flex; align-items: center; justify-content: center; }
.scr::after { content: ""; border: 5px solid transparent; border-left: 0; border-right-color: #8c897c; }
.scr.r { margin-left: 2px; border-color: #1c5180; background: #fff; }
.scr.r::after { border: 5px solid transparent; border-right: 0; border-left-color: #000; }

.mdi { flex: 1; background: #aca899; border: 1px solid #716f64; border-width: 1px 0 0 1px; border-right: 2px solid #f8f6ec; padding-top: 1px; }
.child { width: 547px; height: 390px; padding: 0 4px 4px; background: #0148de; border-radius: 7px 7px 0 0; box-shadow: inset -2px -2px #00128f; }
.ctitle { height: 30px; margin: 0 -4px; padding: 4px 7px 0 6px; display: flex; align-items: center; border-radius: 7px 7px 0 0; background: linear-gradient(#0a5ae0 0, #3490ff 2px, #0664f2 4px, #0054e3 7px, #0055e5 17px, #0266ff 20px, #0266ff 27px, #0046d5 30px); }
h2 { flex: 1; margin-left: 5px; font-size: 11px; font-weight: 400; line-height: 14px; white-space: nowrap; letter-spacing: -.15px; }
.view { height: 356px; background: #000; overflow: hidden; }
.terrain { width: 539px; height: 356px; }
.wm { font: bold 16px "Liberation Sans", sans-serif; fill: #fff; text-anchor: middle; letter-spacing: 0; }
.axis { font: 10px "Liberation Sans", sans-serif; fill: #fff; }
.status { height: 20px; flex: none; border-top: 1px solid #fff; display: flex; justify-content: flex-end; align-items: center; }
.status i { width: 2px; height: 12px; margin-right: 36px; border-left: 1px solid #c5c2b1; border-right: 1px solid #fff; }
.status i:nth-child(6) { margin-right: 5px; }
.status svg { width: 12px; height: 12px; align-self: flex-end; margin: 0 1px 1px 0; }
```
